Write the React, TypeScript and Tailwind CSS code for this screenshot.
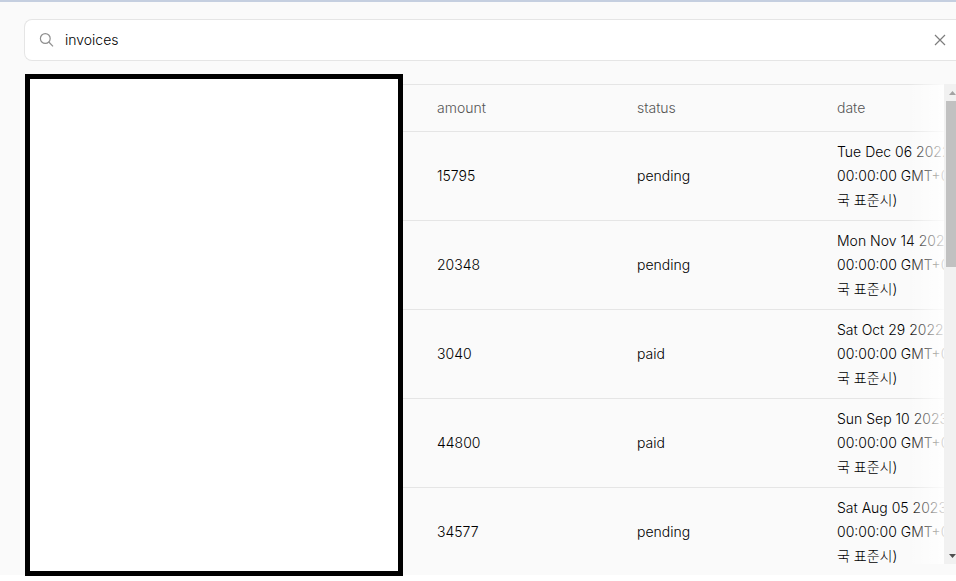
const invoices = [
  { amount: 15795, status: "pending", day: "Tue Dec 06 2022" },
  { amount: 20348, status: "pending", day: "Mon Nov 14 2022" },
  { amount: 3040, status: "paid", day: "Sat Oct 29 2022" },
  { amount: 44800, status: "paid", day: "Sun Sep 10 2023" },
  { amount: 34577, status: "pending", day: "Sat Aug 05 2023" },
];

function SearchBar() {
  return (
    <div className="ml-6 flex h-[42px] items-center rounded-l-lg border border-r-0 border-[#e5e5e5] bg-white pr-2 pl-[14px]">
      <label htmlFor="search" className="flex h-4 w-4 shrink-0 text-[#8f8f8f]" aria-label="Search">
        <svg width="16" height="16" viewBox="0 0 16 16" fill="none" stroke="currentColor" strokeWidth="1.2">
          <circle cx="6.3" cy="6.5" r="4.9" />
          <path d="M9.8 10l4.2 4.4" />
        </svg>
      </label>
      <input
        id="search"
        type="text"
        defaultValue="invoices"
        className="ml-2.5 h-6 min-w-0 flex-1 bg-transparent leading-6 text-black outline-none"
      />
      <button type="button" aria-label="Clear" className="flex h-4 w-4 shrink-0 items-center justify-center text-[#7d7d7d]">
        <svg width="16" height="16" viewBox="0 0 16 16" fill="none" stroke="currentColor" strokeWidth="1.2">
          <path d="M3 3l10 10M13 3L3 13" />
        </svg>
      </button>
    </div>
  );
}

function Scrollbar() {
  return (
    <div aria-hidden="true" className="flex w-3 shrink-0 flex-col overflow-hidden bg-[#f1f1f1] pl-0.5">
      <div className="flex h-[17px] w-[13px] shrink-0 items-center justify-center">
        <svg width="7" height="4" viewBox="0 0 7 4" fill="#a3a3a3">
          <path d="M0 4L3.5 0L7 4z" />
        </svg>
      </div>
      <div className="h-[166px] w-[13px] shrink-0 bg-[#c1c1c1]" />
      <div className="flex-1" />
      <div className="flex h-[17px] w-[13px] shrink-0 items-center justify-center">
        <svg width="7" height="4" viewBox="0 0 7 4" fill="#505050">
          <path d="M0 0L3.5 4L7 0z" />
        </svg>
      </div>
    </div>
  );
}

function InvoiceTable() {
  return (
    <div className="relative min-w-0 flex-1 overflow-hidden">
      <table className="w-[622px] table-fixed border-separate border-spacing-0 border-t border-[#e5e5e5] text-left">
        <colgroup>
          <col className="w-[222px]" />
          <col className="w-[200px]" />
          <col className="w-[200px]" />
        </colgroup>
        <thead className="text-[#555555]">
          <tr>
            <th className="border-b border-[#e5e5e5] py-[11px] pl-[34px] font-light">amount</th>
            <th className="border-b border-[#e5e5e5] px-3 py-[11px] font-light">status</th>
            <th className="border-b border-[#e5e5e5] px-3 py-[11px] font-light">date</th>
          </tr>
        </thead>
        <tbody>
          {invoices.map((row) => (
            <tr key={row.day}>
              <td className="border-b border-[#e5e5e5] py-2 pl-[34px]">{row.amount}</td>
              <td className="border-b border-[#e5e5e5] px-3 py-2">{row.status}</td>
              <td className="border-b border-[#e5e5e5] px-3 py-2 whitespace-nowrap">
                {row.day}
                <br />
                00:00:00 GMT+0900 (한
                <br />국 표준시)
              </td>
            </tr>
          ))}
        </tbody>
      </table>
      <div className="pointer-events-none absolute inset-y-0 right-0 w-9 bg-linear-to-r from-white/0 to-white/85" />
    </div>
  );
}

export default function App() {
  return (
    <div className="min-h-screen overflow-hidden bg-white font-['Inter','Noto_Sans_CJK_KR',sans-serif] text-sm leading-6 font-light text-black">
      <div className="h-[575px] border-t-2 border-[#c5cfe0] bg-[#fafafa] pt-[17px]">
        <SearchBar />
        <main className="flex items-start pl-[25px]">
          <section aria-label="Preview" className="mt-[13px] h-[502px] w-[378px] shrink-0 border-5 border-black bg-white" />
          <div className="mt-[23px] flex h-[480px] min-w-0 flex-1">
            <InvoiceTable />
            <Scrollbar />
          </div>
        </main>
      </div>
    </div>
  );
}
